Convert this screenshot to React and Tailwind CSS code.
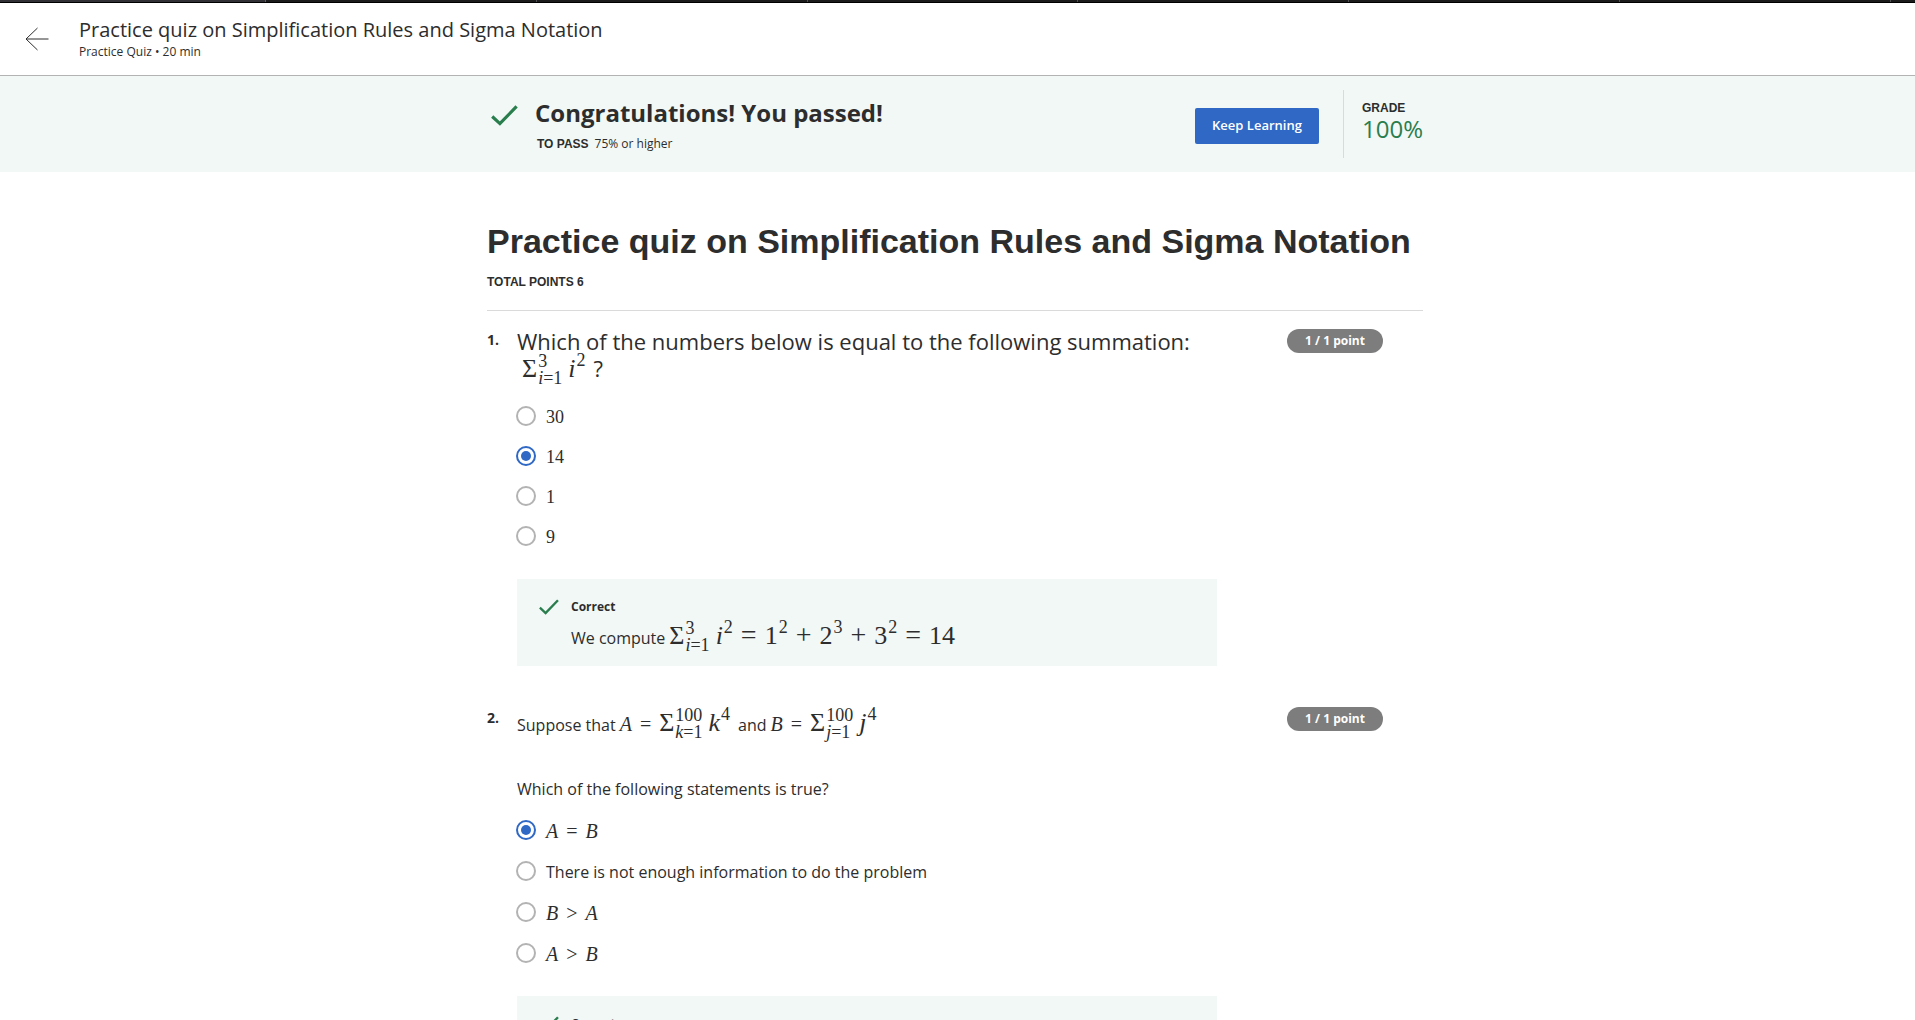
import { useState } from "react";

const serif = "font-['Liberation_Serif','Times_New_Roman',serif]";
const sans = "font-['Liberation_Sans',Arial,sans-serif]";

function Check({ className }) {
  return (
    <svg className={className} viewBox="0 0 27 21" fill="none" aria-hidden="true">
      <path d="M1.2 11.5 L8.9 18.6 L25.6 1.4" stroke="#2A7E4E" strokeWidth="3.2" />
    </svg>
  );
}

function Sum({ from, to }) {
  return (
    <span className="mr-1.5 whitespace-nowrap">
      Σ
      <span className="inline-flex flex-col pl-px align-[10px] text-lg leading-[17px]">
        <span>{to}</span>
        <span>
          <i>{from}</i>=1
        </span>
      </span>
    </span>
  );
}

function Power({ base, exp }) {
  return (
    <span className="whitespace-nowrap">
      {base}
      <span className="ml-px inline-block align-[11px] text-lg leading-3">{exp}</span>
    </span>
  );
}

function Op({ children }) {
  return <span className="px-2">{children}</span>;
}

function BigOp({ children }) {
  return <span className="px-2 text-[28px] leading-7">{children}</span>;
}

function Points() {
  return (
    <span className="mr-10 flex h-6 w-24 shrink-0 items-center justify-center rounded-full bg-[#7d7d7d] text-xs font-bold text-white">
      1 / 1 point
    </span>
  );
}

function Option({ name, value, picked, onPick, children }) {
  return (
    <label className="flex h-5 items-center gap-2.5">
      <input
        type="radio"
        name={name}
        checked={picked === value}
        onChange={() => onPick(value)}
        className="size-5 shrink-0 appearance-none rounded-full border-2 border-[#b3b3b3] bg-white checked:border-[#2F68C5] checked:bg-[#2F68C5] checked:bg-clip-content checked:p-[3px]"
      />
      <span className="pt-0.5">{children}</span>
    </label>
  );
}

function Relation({ left, op, right }) {
  return (
    <span className={`text-xl leading-5 ${serif}`}>
      <i>{left}</i>
      <Op>{op}</Op>
      <i>{right}</i>
    </span>
  );
}

function Feedback({ children }) {
  return (
    <div className="mt-[33px] ml-[30px] flex min-h-[87px] max-w-[700px] items-start gap-3 bg-[#F2F8F6] pt-5 pl-[22px]">
      <Check className="h-4 w-5 shrink-0" />
      <div>
        <p className="text-xs leading-4 font-bold">Correct</p>
        <p className="mt-[5px] text-base leading-8">{children}</p>
      </div>
    </div>
  );
}

export default function App() {
  const [first, setFirst] = useState("14");
  const [second, setSecond] = useState("eq");
  return (
    <div className="h-screen overflow-hidden bg-white font-['Open_Sans',sans-serif] text-[#2d2d2d]">
      <div className="flex h-[3px] border-b border-black bg-[#1b1b1b]">
        <span className="w-[266px] border-r border-[#606064] bg-[#313135]" />
        <span className="flex-1 border-r border-[#505054]" />
        <span className="flex-1 border-r border-[#505054]" />
        <span className="flex-1 border-r border-[#505054]" />
        <span className="flex-1 border-r border-[#505054]" />
        <span className="flex-1 border-r border-[#505054]" />
        <span className="flex-1 border-r border-[#505054]" />
        <span className="w-6" />
      </div>
      <header className="flex h-[73px] items-center gap-[30px] border-b border-[#b3b3b3] px-6">
        <button type="button" aria-label="Back">
          <svg className="h-6 w-[25px]" viewBox="0 0 25 24" fill="none" stroke="#2d2d2d">
            <path d="M24.5 12 H2 M13.5 1 L2 12 L13.5 23" />
          </svg>
        </button>
        <div className="pt-0.5">
          <p className="text-xl leading-6">Practice quiz on Simplification Rules and Sigma Notation</p>
          <p className="text-xs leading-5">Practice Quiz • 20 min</p>
        </div>
      </header>
      <section className="bg-[#F2F8F6] pr-[5px]">
        <div className="mx-auto flex h-24 max-w-[936px] items-center">
          <Check className="mt-[29px] ml-1 h-[21px] w-[27px] self-start" />
          <div className="ml-[17px] self-start pt-[21px]">
            <h2 className="text-2xl font-bold">Congratulations! You passed!</h2>
            <p className="mt-[7px] pl-0.5 text-xs">
              <b className={`mr-1.5 ${sans}`}>TO PASS</b>75% or higher
            </p>
          </div>
          <button type="button" className="mt-1 ml-auto h-9 w-[124px] rounded-xs bg-[#2F68C5] text-[13px] font-semibold text-white">
            Keep Learning
          </button>
          <div className="ml-6 h-[68px] border-l border-[#dadada] pt-2.5 pl-[18px]">
            <p className={`text-xs font-bold ${sans}`}>GRADE</p>
            <p className="text-2xl leading-[26px] text-[#2A7E4E]">100%</p>
          </div>
        </div>
      </section>
      <main className="pr-[5px]">
        <div className="mx-auto max-w-[936px] pt-[47px]">
          <h1 className={`text-[34px] leading-[44px] font-bold ${sans}`}>
            Practice quiz on Simplification Rules and Sigma Notation
          </h1>
          <p className={`mt-[11px] text-xs font-bold ${sans}`}>TOTAL POINTS 6</p>
          <hr className="mt-5 border-[#dadada]" />
          <section className="mt-[18px] flex items-start">
            <span className="w-[30px] shrink-0 text-sm leading-[22px] font-bold">1.</span>
            <div className="min-w-0 flex-1">
              <p className="text-[22px] leading-6">Which of the numbers below is equal to the following summation:</p>
              <p className={`h-8 pl-[5px] text-[26px] leading-7 ${serif}`}>
                <Sum from="i" to="3" />
                <Power base={<i>i</i>} exp="2" />
                <span className="pl-2 font-['Open_Sans',sans-serif] text-[22px]">?</span>
              </p>
              <div className={`mt-[21px] -ml-px grid gap-5 text-lg leading-5 ${serif}`}>
                {["30", "14", "1", "9"].map((v) => (
                  <Option key={v} name="q1" value={v} picked={first} onPick={setFirst}>
                    {v}
                  </Option>
                ))}
              </div>
            </div>
            <Points />
          </section>
          <Feedback>
            We compute
            <span className={`pl-1 text-[26px] ${serif}`}>
              <Sum from="i" to="3" />
              <Power base={<i>i</i>} exp="2" />
              <BigOp>=</BigOp>
              <Power base="1" exp="2" />
              <BigOp>+</BigOp>
              <Power base="2" exp="3" />
              <BigOp>+</BigOp>
              <Power base="3" exp="2" />
              <BigOp>=</BigOp>
              14
            </span>
          </Feedback>
          <section className="mt-[41px] flex items-start">
            <span className="w-[30px] shrink-0 text-sm leading-[22px] font-bold">2.</span>
            <div className="min-w-0 flex-1">
              <p className="h-9 text-base leading-8">
                Suppose that
                <span className={`pr-2 pl-1 text-[26px] ${serif}`}>
                  <span className="text-xl">
                    <i>A</i>
                    <Op>=</Op>
                  </span>
                  <Sum from="k" to="100" />
                  <Power base={<i>k</i>} exp="4" />
                </span>
                and
                <span className={`pl-1 text-[26px] ${serif}`}>
                  <span className="text-xl">
                    <i>B</i>
                    <Op>=</Op>
                  </span>
                  <Sum from="j" to="100" />
                  <Power base={<i>j</i>} exp="4" />
                </span>
              </p>
              <p className="mt-[34px] text-base">Which of the following statements is true?</p>
              <div className="mt-[19px] -ml-px grid gap-[21px] text-base leading-5">
                <Option name="q2" value="eq" picked={second} onPick={setSecond}>
                  <Relation left="A" op="=" right="B" />
                </Option>
                <Option name="q2" value="none" picked={second} onPick={setSecond}>
                  There is not enough information to do the problem
                </Option>
                <Option name="q2" value="gt" picked={second} onPick={setSecond}>
                  <Relation left="B" op=">" right="A" />
                </Option>
                <Option name="q2" value="lt" picked={second} onPick={setSecond}>
                  <Relation left="A" op=">" right="B" />
                </Option>
              </div>
            </div>
            <Points />
          </section>
          <Feedback />
        </div>
      </main>
    </div>
  );
}
